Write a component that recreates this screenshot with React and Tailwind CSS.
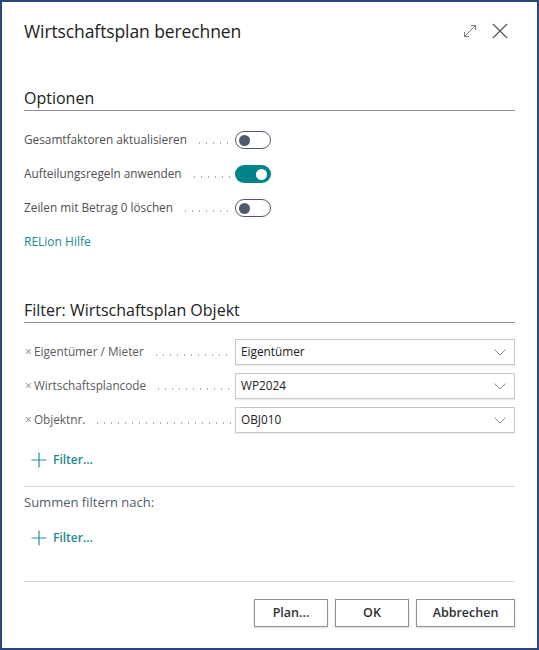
import React from "react";

const FONT = "font-['Segoe_UI','Open_Sans',sans-serif]";

const Leader = () => (
  <div className="flex-1 self-center h-[2px] ml-[9px] mr-[4px] mt-[5px] bg-[radial-gradient(circle,#b0b0b0_0.7px,transparent_1.1px)] bg-[length:7px_2px] bg-repeat-x" />
);

const Toggle = ({ on }) =>
  on ? (
    <div className="w-[36px] h-[18px] rounded-full bg-[#008489] flex items-center justify-end pr-[4px]">
      <div className="w-[11px] h-[11px] rounded-full bg-white" />
    </div>
  ) : (
    <div className="w-[36px] h-[18px] rounded-full border-[1.5px] border-[#4f5b6d] flex items-center pl-[3px]">
      <div className="w-[11px] h-[11px] rounded-full bg-[#4f5b6d]" />
    </div>
  );

const ToggleRow = ({ label, on }) => (
  <div className="h-[34px] flex items-center">
    <div className="w-[211px] flex items-center text-[11.8px] text-[#505050]">
      <span className="whitespace-nowrap">{label}</span>
      <Leader />
    </div>
    <Toggle on={on} />
  </div>
);

const Chevron = () => (
  <svg width="12" height="7" viewBox="0 0 12 7" fill="none">
    <path d="M0.5 0.5 L6 6 L11.5 0.5" stroke="#8a8a8a" strokeWidth="1" />
  </svg>
);

const FilterRow = ({ label, value }) => (
  <div className="h-[34px] flex items-center">
    <div className="w-[211px] flex items-center text-[11.8px] text-[#5a5a5a]">
      <span className="text-[12px] text-[#8a8a8a] mr-[2px] ml-[1px]">×</span>
      <span className="whitespace-nowrap">{label}</span>
      <Leader />
    </div>
    <div className="flex-1 h-[26px] border border-[#c8c8c8] shadow-[0_1px_1px_rgba(0,0,0,0.08)] flex items-center justify-between pl-[5px] pr-[8px] text-[11.8px] text-[#212121]">
      <span>{value}</span>
      <Chevron />
    </div>
  </div>
);

const Plus = () => (
  <svg width="16" height="16" viewBox="0 0 16 16" fill="none">
    <path d="M8 0.5 V15.5 M0.5 8 H15.5" stroke="#2a9096" strokeWidth="1.2" />
  </svg>
);

const AddFilter = ({ className }) => (
  <div className={"h-[32px] flex items-center pl-[7px] gap-[6px] " + className}>
    <Plus />
    <span className="text-[12px] font-semibold text-[#1d8a8f]">Filter...</span>
  </div>
);

const Button = ({ children, w }) => (
  <div
    className={
      "h-[28px] border border-[#8f8f8f] bg-white shadow-[0_1px_2px_rgba(0,0,0,0.15)] flex items-center justify-center text-[12.5px] font-semibold text-[#303030] " +
      w
    }
  >
    {children}
  </div>
);

export default function App() {
  return (
    <div className={"w-[539px] h-[650px] border-2 border-[#2b4679] bg-white px-[22px] " + FONT}>
      {/* header */}
      <div className="h-[58px] flex items-center justify-between">
        <div className="text-[17.5px] text-[#212121] tracking-[-0.1px]">Wirtschaftsplan berechnen</div>
        <div className="flex items-center gap-[15px] pr-[7px]">
          <svg width="14" height="14" viewBox="0 0 14 14" fill="none">
            <path d="M1.5 12.5 L12.5 1.5" stroke="#7a7a7a" strokeWidth="1" />
            <path d="M8 1.5 H12.5 V6" stroke="#7a7a7a" strokeWidth="1" />
            <path d="M1.5 8 V12.5 H6" stroke="#7a7a7a" strokeWidth="1" />
          </svg>
          <svg width="16" height="16" viewBox="0 0 16 16" fill="none">
            <path d="M1 1 L15 15 M15 1 L1 15" stroke="#555555" strokeWidth="1.2" />
          </svg>
        </div>
      </div>

      {/* Optionen */}
      <div className="mt-[26px] h-[25px] leading-[24px] border-b border-[#8b95a5] text-[16px] font-medium text-[#212121]">
        Optionen
      </div>
      <div className="mt-[12px]">
        <ToggleRow label="Gesamtfaktoren aktualisieren" on={false} />
        <ToggleRow label="Aufteilungsregeln anwenden" on={true} />
        <ToggleRow label="Zeilen mit Betrag 0 löschen" on={false} />
      </div>
      <div className="h-[34px] flex items-center text-[12px] font-medium text-[#1d8a8f]">RELion Hilfe</div>

      {/* Filter */}
      <div className="mt-[39px] h-[25px] leading-[24px] border-b border-[#8b95a5] text-[16px] font-medium text-[#212121]">
        Filter: Wirtschaftsplan Objekt
      </div>
      <div className="mt-[12px]">
        <FilterRow label="Eigentümer / Mieter" value="Eigentümer" />
        <FilterRow label="Wirtschaftsplancode" value="WP2024" />
        <FilterRow label="Objektnr." value="OBJ010" />
      </div>
      <AddFilter className="mt-[7px]" />

      <div className="mt-[10px] border-t border-[#d6d6d6]" />
      <div className="mt-[4px] h-[24px] flex items-center text-[13px] text-[#505c6d]">Summen filtern nach:</div>
      <AddFilter className="mt-[7px]" />

      <div className="mt-[27px] border-t border-[#d6d6d6]" />
      <div className="mt-[17px] flex justify-end gap-[7px]">
        <Button w="w-[74px]">Plan...</Button>
        <Button w="w-[74px]">OK</Button>
        <Button w="w-[99px]">Abbrechen</Button>
      </div>
    </div>
  );
}
